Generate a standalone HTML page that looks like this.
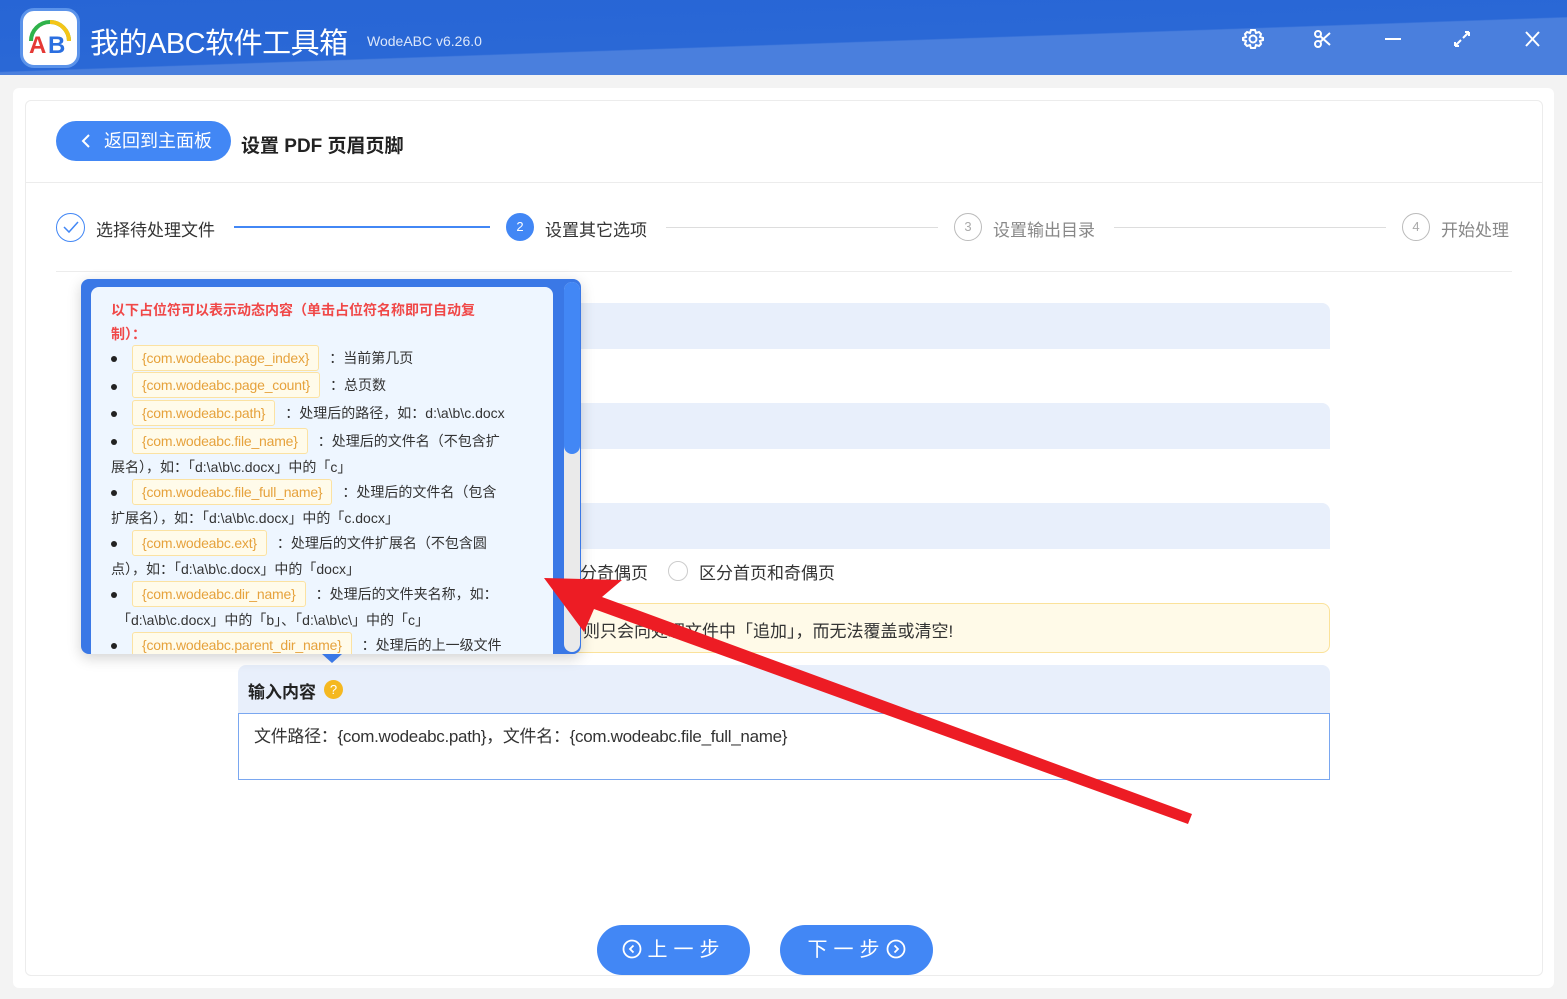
<!DOCTYPE html>
<html><head><meta charset="utf-8">
<style>
*{margin:0;padding:0;box-sizing:border-box}
body{width:1567px;height:999px;overflow:hidden;background:#f3f3f3;font-family:"Liberation Sans","Noto Sans CJK SC",sans-serif;position:relative;color:#333}
.abs{position:absolute}
.hdr{left:0;top:0;width:1567px;height:75px;background:linear-gradient(178deg,#2765d5 0%,#2a68d6 55%,#4a7fdd 56%,#4a7fdd 100%)}
.logo{left:20px;top:8px;width:60px;height:60px;border-radius:14px;background:#fff;border:3px solid #5b93ea}
.title{left:90px;top:20px;color:#fff;font-size:29px;letter-spacing:-0.5px}
.ver{left:367px;top:33px;color:#dce7fa;font-size:14px}
.card{left:13px;top:88px;width:1541px;height:900px;background:#fff;border-radius:6px}
.inner{left:25px;top:100px;width:1518px;height:876px;border:1px solid #ececec;border-radius:6px}
.back{left:56px;top:121px;width:175px;height:40px;background:#4287f5;border-radius:20px;color:#fff;font-size:18px;line-height:40px;padding-left:48px}
.ptitle{left:241px;top:131px;font-size:19px;font-weight:bold;color:#222}
.hl{left:26px;top:182px;width:1516px;height:1px;background:#ececec}
.step{font-size:17px;color:#333;top:216px}
.circ{width:28px;height:28px;border-radius:50%;border:1px solid #bbb;color:#aaa;font-size:13px;text-align:center;line-height:26px;top:213px}
.bar{background:#e8effb;border-radius:8px 8px 0 0}
.tag{display:inline-block;border:1px solid #fbe2a2;background:#fffbea;color:#e6a23c;height:26px;line-height:24px;padding:0 9px;border-radius:3px;margin-left:21px;margin-right:10px;letter-spacing:-0.2px}
.li{position:absolute;left:111px;font-size:14px;color:#333;white-space:nowrap}
.dot{position:absolute;left:111px;width:6px;height:6px;border-radius:50%;background:#222}
.btn{top:925px;width:153px;height:50px;border-radius:25px;background:#4287f5;color:#fff;font-size:20px;line-height:50px;text-align:center;letter-spacing:6px}
</style></head><body>
<div class="abs hdr"></div>
<div class="abs logo"><svg width="54" height="54" viewBox="0 0 54 54"><path d="M8 30 A19 19 0 0 1 46 30" fill="none" stroke="#2fb24a" stroke-width="4"/><path d="M27 11 A19 19 0 0 1 46 30" fill="none" stroke="#f5c518" stroke-width="4"/><text x="6" y="42" font-size="24" font-weight="bold" fill="#e53935" font-family="Liberation Sans">A</text><text x="25" y="42" font-size="24" font-weight="bold" fill="#2b6fe0" font-family="Liberation Sans">B</text></svg></div>
<div class="abs title">我的ABC软件工具箱</div>
<div class="abs ver">WodeABC v6.26.0</div>
<svg class="abs" style="left:1240px;top:26px" width="310" height="26" viewBox="0 0 310 26" fill="none" stroke="#fff" stroke-width="2">
<circle cx="13" cy="13" r="3.5"/><path d="M13 4l2 0 1 3 3-1 2 2-1 3 3 1v2l-3 1 1 3-2 2-3-1-1 3h-4l-1-3-3 1-2-2 1-3-3-1v-2l3-1-1-3 2-2 3 1 1-3z"/>
<circle cx="78" cy="18" r="3"/><circle cx="78" cy="8" r="3"/><path d="M80 10l10 9M80 16l10-9"/>
<path d="M145 13h16"/>
<path d="M215 20l6-6M223 12l6-6M229 6h-4M229 6v4M215 20h4M215 20v-4"/>
<path d="M286 6l13 14M299 6l-13 14"/>
</svg>
<div class="abs card"></div>
<div class="abs inner"></div>
<div class="abs back">返回到主面板</div>
<svg class="abs" style="left:80px;top:133px" width="12" height="16"><path d="M9 2L3 8l6 6" fill="none" stroke="#fff" stroke-width="2"/></svg>
<div class="abs ptitle">设置 PDF 页眉页脚</div>
<div class="abs hl"></div>
<div class="abs" style="left:56px;top:213px;width:29px;height:29px;border-radius:50%;border:1px solid #4287f5"></div>
<svg class="abs" style="left:62px;top:220px" width="18" height="14"><path d="M2 7l5 5 9-10" fill="none" stroke="#4287f5" stroke-width="1.5"/></svg>
<div class="abs step" style="left:96px">选择待处理文件</div>
<div class="abs" style="left:234px;top:226px;width:256px;height:2px;background:#4287f5"></div>
<div class="abs circ" style="left:506px;background:#4287f5;border-color:#4287f5;color:#fff">2</div>
<div class="abs step" style="left:545px">设置其它选项</div>
<div class="abs" style="left:666px;top:227px;width:272px;height:1px;background:#ddd"></div>
<div class="abs circ" style="left:954px">3</div>
<div class="abs step" style="left:993px;color:#888">设置输出目录</div>
<div class="abs" style="left:1114px;top:227px;width:272px;height:1px;background:#ddd"></div>
<div class="abs circ" style="left:1402px">4</div>
<div class="abs step" style="left:1441px;color:#888">开始处理</div>
<div class="abs" style="left:56px;top:271px;width:1456px;height:1px;background:#ececec"></div>

<div class="abs bar" style="left:560px;top:303px;width:770px;height:46px"></div>
<div class="abs bar" style="left:560px;top:403px;width:770px;height:46px"></div>
<div class="abs bar" style="left:560px;top:503px;width:770px;height:46px"></div>
<div class="abs" style="left:580px;top:559px;font-size:17px">分奇偶页</div>
<div class="abs" style="left:668px;top:561px;width:20px;height:20px;border-radius:50%;border:1px solid #ccc"></div>
<div class="abs" style="left:699px;top:559px;font-size:17px">区分首页和奇偶页</div>
<div class="abs" style="left:560px;top:603px;width:770px;height:50px;background:#fffae8;border:1px solid #fbe29a;border-radius:8px"></div>
<div class="abs" style="left:583px;top:617px;font-size:17px">则只会向处理文件中「追加」，而无法覆盖或清空!</div>
<div class="abs bar" style="left:238px;top:665px;width:1092px;height:48px"></div>
<div class="abs" style="left:248px;top:678px;font-size:17px;font-weight:bold;color:#222">输入内容</div>
<div class="abs" style="left:324px;top:680px;width:19px;height:19px;border-radius:50%;background:#f5b820;color:#fff;font-size:13px;text-align:center;line-height:19px">?</div>
<div class="abs" style="left:238px;top:713px;width:1092px;height:67px;border:1px solid #7aa7f0;background:#fff"></div>
<div class="abs" style="left:254px;top:722px;font-size:17px;letter-spacing:-0.3px">文件路径：{com.wodeabc.path}，文件名：{com.wodeabc.file_full_name}</div>

<!-- popup -->
<div class="abs" style="left:81px;top:279px;width:500px;height:375px;background:#3a78e6;border-radius:8px;box-shadow:0 4px 14px rgba(0,0,0,.18);overflow:hidden">
<div class="abs" style="left:10px;top:8px;width:462px;height:380px;background:#eef6ff;border-radius:8px"></div>
<div class="abs" style="left:483px;top:3px;width:16px;height:370px;background:#eaeaea;border-radius:8px"></div>
<div class="abs" style="left:483px;top:3px;width:16px;height:172px;background:#4287f5;border-radius:8px"></div>
</div>
<div class="abs" style="left:322px;top:654px;width:0;height:0;border-left:10px solid transparent;border-right:10px solid transparent;border-top:9px solid #3a78e6"></div>
<div style="position:absolute;left:0;top:0;width:560px;height:654px;overflow:hidden">
<div class="li" style="top:300px;color:#f04848;font-weight:bold">以下占位符可以表示动态内容（单击占位符名称即可自动复</div>
<div class="li" style="top:324px;color:#f04848;font-weight:bold">制）：</div>
<div class="li" style="top:345px"><span class="tag">{com.wodeabc.page_index}</span>：当前第几页</div>
<div class="li" style="top:372px"><span class="tag">{com.wodeabc.page_count}</span>：总页数</div>
<div class="li" style="top:400px"><span class="tag">{com.wodeabc.path}</span>：处理后的路径，如：d:\a\b\c.docx</div>
<div class="li" style="top:428px"><span class="tag">{com.wodeabc.file_name}</span>：处理后的文件名（不包含扩</div>
<div class="li" style="top:457px">展名），如：「d:\a\b\c.docx」中的「c」</div>
<div class="li" style="top:479px"><span class="tag">{com.wodeabc.file_full_name}</span>：处理后的文件名（包含</div>
<div class="li" style="top:508px">扩展名），如：「d:\a\b\c.docx」中的「c.docx」</div>
<div class="li" style="top:530px"><span class="tag">{com.wodeabc.ext}</span>：处理后的文件扩展名（不包含圆</div>
<div class="li" style="top:559px">点），如：「d:\a\b\c.docx」中的「docx」</div>
<div class="li" style="top:581px"><span class="tag">{com.wodeabc.dir_name}</span>：处理后的文件夹名称，如：</div>
<div class="li" style="top:610px;left:117px">「d:\a\b\c.docx」中的「b」、「d:\a\b\c\」中的「c」</div>
<div class="li" style="top:632px"><span class="tag">{com.wodeabc.parent_dir_name}</span>：处理后的上一级文件</div>
<div class="dot" style="top:356px"></div><div class="dot" style="top:384px"></div><div class="dot" style="top:411px"></div><div class="dot" style="top:439px"></div><div class="dot" style="top:490px"></div><div class="dot" style="top:541px"></div><div class="dot" style="top:592px"></div><div class="dot" style="top:643px"></div>
</div>

<!-- red arrow -->
<svg class="abs" style="left:0;top:0" width="1567" height="999"><polygon points="544,578 622,580 602,597 1192,814 1188,824 594,609 584,632" fill="#ed1c24"/></svg>

<div class="abs btn" style="left:597px"><svg width="20" height="20" style="vertical-align:-3px;margin-right:6px"><circle cx="10" cy="10" r="8.5" fill="none" stroke="#fff" stroke-width="1.8"/><path d="M11.5 6.5L8 10l3.5 3.5" fill="none" stroke="#fff" stroke-width="1.8"/></svg>上一步</div>
<div class="abs btn" style="left:780px">下一步<svg width="20" height="20" style="vertical-align:-3px"><circle cx="10" cy="10" r="8.5" fill="none" stroke="#fff" stroke-width="1.8"/><path d="M8.5 6.5L12 10l-3.5 3.5" fill="none" stroke="#fff" stroke-width="1.8"/></svg></div>
</body></html>
